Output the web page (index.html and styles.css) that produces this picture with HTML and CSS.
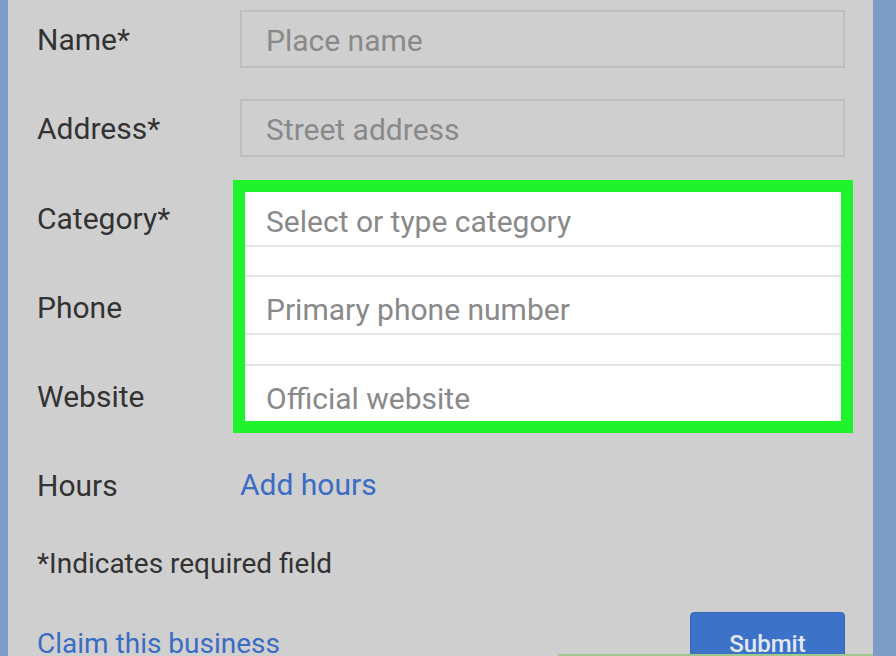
FILE: index.html
```html
<!DOCTYPE html>
<html lang="en">
<head>
	<meta charset="UTF-8">
	<title>Add a place</title>
	<link rel="stylesheet" href="styles.css">
</head>
<body>
	<div class="page">
		<div class="strip strip-left"></div>
		<div class="panel">
			<div class="row">
				<span class="label">Name*</span>
				<div class="input">Place name</div>
			</div>
			<div class="row row-next">
				<span class="label">Address*</span>
				<div class="input">Street address</div>
			</div>

			<div class="group">
				<div class="group-labels">
					<span class="label">Category*</span>
					<span class="label">Phone</span>
					<span class="label">Website</span>
				</div>
				<div class="highlight">
					<div class="hl-field hl-first">Select or type category</div>
					<div class="hl-gap"></div>
					<div class="hl-field hl-mid">Primary phone number</div>
					<div class="hl-gap hl-gap2"></div>
					<div class="hl-field hl-last">Official website</div>
				</div>
			</div>

			<div class="row row-hours">
				<span class="label">Hours</span>
				<a href="#" class="link">Add hours</a>
			</div>

			<p class="note">*Indicates required field</p>

			<div class="footer">
				<a href="#" class="link link-small">Claim this business</a>
				<button class="submit">Submit</button>
			</div>
		</div>
		<div class="strip strip-right"></div>
		<div class="bottom-mark"></div>
	</div>
</body>
</html>
```

FILE: styles.css
```css
html, body{
	margin: 0;
	padding: 0;
	height: 656px;
	overflow: hidden;
}
body{
	font-family: Roboto, "Liberation Sans", sans-serif;
	background-color: #cfcfcf;
}
.page{
	position: relative;
	display: flex;
	height: 656px;
}
.strip{
	background-color: #7d9dc7;
}
.strip-left{
	width: 8px;
}
.strip-right{
	width: 23px;
}
.panel{
	flex: 1;
	padding: 10px 0 0 29px;
	background-color: #cfcfcf;
}
.row{
	display: flex;
	align-items: center;
}
.row-next{
	margin-top: 31px;
}
.label{
	display: block;
	width: 203px;
	height: 34px;
	line-height: 35px;
	font-size: 30px;
	color: #333;
}
.input{
	box-sizing: border-box;
	width: 605px;
	height: 58px;
	line-height: 57px;
	padding-left: 24px;
	border: 2px solid #bebebe;
	font-size: 30px;
	color: #898989;
}
.group{
	display: flex;
	margin-top: 23px;
}
.group-labels{
	display: flex;
	flex-direction: column;
	gap: 55px;
	padding-top: 21px;
}
.highlight{
	width: 596px;
	margin-left: -7px;
	border: 12px solid #20f22c;
	background-color: #fff;
}
.hl-field{
	padding-left: 21px;
	font-size: 30px;
	color: #898989;
}
.hl-first{
	height: 53px;
	line-height: 60px;
	border-bottom: 2px solid #e4e4e4;
}
.hl-mid{
	height: 56px;
	line-height: 66px;
	border-bottom: 2px solid #e4e4e4;
}
.hl-last{
	height: 55px;
	line-height: 66px;
}
.hl-gap{
	height: 28px;
	border-bottom: 2px solid #e4e4e4;
}
.hl-gap2{
	height: 29px;
}
.row-hours{
	margin-top: 34px;
}
.link{
	font-size: 30px;
	line-height: 35px;
	color: #3a6cc4;
	text-decoration: none;
}
.link-small{
	margin-top: 4px;
	font-size: 28px;
}
.note{
	margin: 44px 0 0;
	height: 34px;
	line-height: 35px;
	font-size: 28px;
	color: #333;
}
.footer{
	display: flex;
	justify-content: space-between;
	align-items: center;
	width: 808px;
	margin-top: 32px;
}
.submit{
	width: 155px;
	height: 58px;
	border: 1px solid #3466ba;
	border-radius: 4px;
	background-color: #3d72c9;
	font-family: Roboto, "Liberation Sans", sans-serif;
	font-size: 24px;
	font-weight: 500;
	line-height: 62px;
	color: #e3e9f4;
	padding: 0;
}
.bottom-mark{
	position: absolute;
	left: 558px;
	bottom: 0;
	width: 315px;
	height: 2px;
	background-color: #9dc78b;
}
```
